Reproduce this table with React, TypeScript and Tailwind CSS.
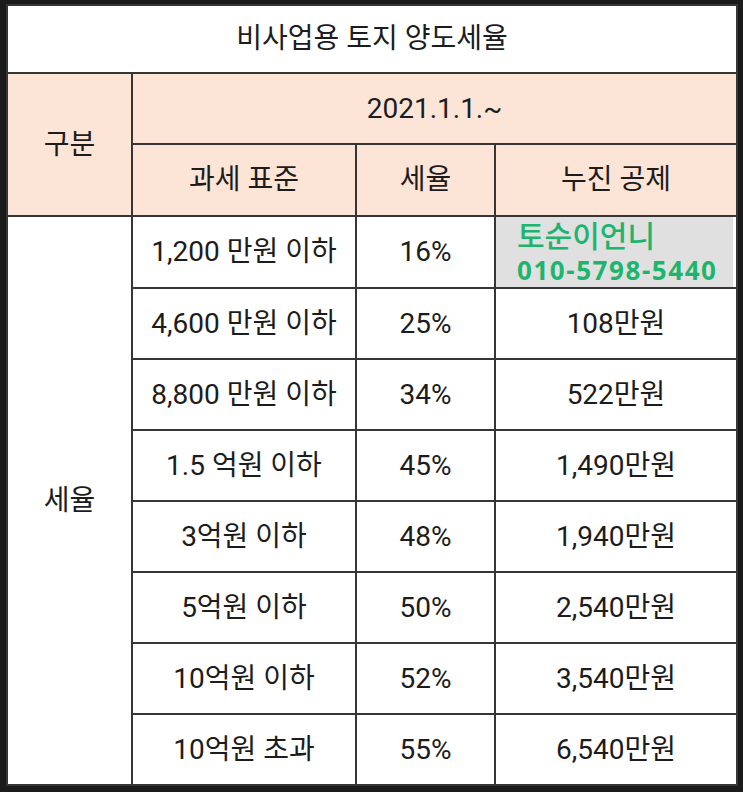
const rows = [
  { base: "1,200 만원 이하", rate: "16%", deduct: "" },
  { base: "4,600 만원 이하", rate: "25%", deduct: "108만원" },
  { base: "8,800 만원 이하", rate: "34%", deduct: "522만원" },
  { base: "1.5 억원 이하", rate: "45%", deduct: "1,490만원" },
  { base: "3억원 이하", rate: "48%", deduct: "1,940만원" },
  { base: "5억원 이하", rate: "50%", deduct: "2,540만원" },
  { base: "10억원 이하", rate: "52%", deduct: "3,540만원" },
  { base: "10억원 초과", rate: "55%", deduct: "6,540만원" },
];

const cell = "border-2 border-[#363636] text-center align-middle p-0";

const App = () => {
  return (
    <div
      className="w-[743px] h-[792px] bg-[#1b1b1b] pl-[6px] pt-[4px] text-[#1c1c1c]"
      style={{ fontFamily: 'Roboto, "Noto Sans CJK KR", sans-serif' }}
    >
      <table className="table-fixed border-collapse bg-white w-[732px] text-[28px] leading-none">
        <colgroup>
          <col className="w-[125px]" />
          <col className="w-[224px]" />
          <col className="w-[139px]" />
          <col />
        </colgroup>
        <tbody>
          <tr className="h-[68px]">
            <td colSpan={4} className={cell}>
              비사업용 토지 양도세율
            </td>
          </tr>
          <tr className="h-[71px] bg-[#fce4d6]">
            <td rowSpan={2} className={cell}>
              구분
            </td>
            <td colSpan={3} className={cell}>
              2021.1.1.~
            </td>
          </tr>
          <tr className="h-[72px] bg-[#fce4d6]">
            <td className={cell}>과세 표준</td>
            <td className={cell}>세율</td>
            <td className={cell}>누진 공제</td>
          </tr>
          {rows.map((r, i) => (
            <tr key={r.base} className="h-[71px]">
              {i === 0 && (
                <td rowSpan={rows.length} className={cell}>
                  세율
                </td>
              )}
              <td className={cell}>{r.base}</td>
              <td className={cell}>{r.rate}</td>
              {i === 0 ? (
                <td className={cell}>
                  <div
                    className="h-[70px] mr-[3px] bg-[#e0e0e0] pl-[21px] pt-[1px] text-left text-[#1db56d] font-medium"
                    style={{ fontFamily: '"Noto Sans", "Noto Sans CJK KR", sans-serif' }}
                  >
                    <div className="text-[30px] leading-[36px]">토순이언니</div>
                    <div className="text-[26px] leading-[32px] tracking-[0.06em] font-bold">
                      010-5798-5440
                    </div>
                  </div>
                </td>
              ) : (
                <td className={cell}>{r.deduct}</td>
              )}
            </tr>
          ))}
        </tbody>
      </table>
    </div>
  );
};

export default App;
